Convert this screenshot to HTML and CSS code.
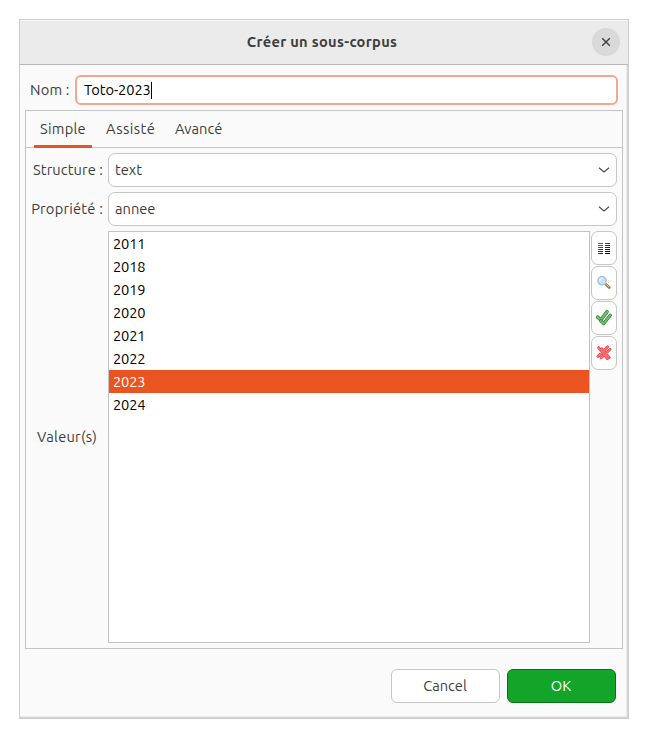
FILE: index.html
```html
<!DOCTYPE html>
<html lang="fr">
<head>
<meta charset="utf-8">
<title>Créer un sous-corpus</title>
<link rel="stylesheet" href="styles.css">
</head>
<body>
<main class="dialog">
  <header class="titlebar">
    <h1 class="title">Créer un sous-corpus</h1>
    <button class="close" aria-label="Close"><svg width="10" height="10" viewBox="0 0 10 10"><path d="M1.2 1.2 8.8 8.8M8.8 1.2 1.2 8.8" stroke="#3d3d3d" stroke-width="1.4"/></svg></button>
  </header>
  <div class="name-row">
    <span class="name-label">Nom :</span>
    <div class="entry"><span class="entry-text">Toto-2023</span><i class="caret"></i></div>
  </div>
  <section class="notebook">
    <nav class="tabs">
      <span class="tab active">Simple</span>
      <span class="tab assist">Assisté</span>
      <span class="tab">Avancé</span>
    </nav>
    <div class="form">
      <span class="label structure">Structure :</span>
      <div class="combo"><span>text</span><svg width="12" height="8" viewBox="0 0 12 8"><path d="M1 1.7 6 6 11 1.7" fill="none" stroke="#4d4d4d" stroke-width="1.2"/></svg></div>
      <span class="label property">Propriété :</span>
      <div class="combo"><span>annee</span><svg width="12" height="8" viewBox="0 0 12 8"><path d="M1 1.7 6 6 11 1.7" fill="none" stroke="#4d4d4d" stroke-width="1.2"/></svg></div>
      <span class="label values">Valeur(s)</span>
      <div class="value-area">
        <ul class="list">
          <li>2011</li><li>2018</li><li>2019</li><li>2020</li><li>2021</li><li>2022</li><li class="selected">2023</li><li>2024</li>
        </ul>
        <div class="tools">
          <button class="tool" aria-label="List"><svg width="16" height="16" viewBox="0 0 16 16"><defs><linearGradient id="ink" gradientUnits="userSpaceOnUse" x1="2" y1="2" x2="12" y2="14"><stop stop-color="#777"/><stop offset="1" stop-color="#000"/></linearGradient></defs><path d="M2 3.5h5M9 3.5h5M2 5.5h5M9 5.5h5M2 7.5h5M9 7.5h5M2 9.5h5M9 9.5h5M2 11.5h5M9 11.5h5M2 13.5h5M9 13.5h5" stroke="url(#ink)"/></svg></button>
          <button class="tool" aria-label="Search"><svg width="16" height="16" viewBox="0 0 16 16"><path d="m10 9.6 3.2 3" stroke="#a87a45" stroke-width="2.8" stroke-linecap="round"/><path d="m10.5 9.6 2.5 2.4" stroke="#eac08a"/><circle cx="6" cy="5.8" r="4.2" fill="#c5e1fa" stroke="#9bb9e2" stroke-width="1.2"/><path d="M3.6 5.8Q4 3.2 6.7 3.3" fill="none" stroke="#eff8ff" stroke-width="1.5"/></svg></button>
          <button class="tool" aria-label="Select all"><svg width="18" height="18" viewBox="0 0 18 18"><g fill="none" stroke-linecap="round" stroke-linejoin="round"><path d="M2.6 8.2 5.8 11 12 2.8" stroke="#37873b" stroke-width="3.6"/><path d="M2.6 8.2 5.8 11 12 2.8" stroke="#76c076" stroke-width="2"/><path d="m5.7 11.8 3 2.7 6.6-8.2" stroke="#37873b" stroke-width="3.4"/><path d="m5.7 11.8 3 2.7 6.6-8.2" stroke="#76c076" stroke-width="1.8"/></g></svg></button>
          <button class="tool" aria-label="Clear"><svg width="18" height="18" viewBox="0 0 18 18"><g fill="none" stroke-linecap="round"><path d="m3.6 3.6 8.8 11M6.8 4.8l7.4 8.8M12.6 2.8 3 12.4M15 5.2 6.2 13.8" stroke="#e83f46" stroke-width="2.8"/><path d="m3.6 3.6 8.8 11M6.8 4.8l7.4 8.8M12.6 2.8 3 12.4M15 5.2 6.2 13.8" stroke="#ff6b70" stroke-width="1.7"/></g></svg></button>
        </div>
      </div>
    </div>
  </section>
  <footer class="actions">
    <button class="action">Cancel</button>
    <button class="action ok">OK</button>
  </footer>
</main>
</body>
</html>
```
FILE: styles.css
```css
* { box-sizing: border-box; }
body { margin: 0; padding: 19px; background: #fff; font: 14.667px/20px Ubuntu, "Noto Sans", sans-serif; color: #3d3d3d; }
button { font: inherit; color: inherit; padding: 0; margin: 0; }
svg { display: block; }
.dialog { width: 610px; height: 700px; display: flex; flex-direction: column; background: #fafafa; border: 1px solid #cdcdcd; box-shadow: inset -1px -1px #d4d4d4, inset -2px -2px #ececec; }
.titlebar { height: 45px; flex: none; display: grid; grid-template-columns: 1fr auto 1fr; align-items: center; background: #ebebeb; border-top: 1px solid #fafafa; border-bottom: 1px solid #b8b8b8; padding: 0 8px 2px 0; }
.title { grid-column: 2; margin: 0 0 0 4px; font-size: 14.667px; line-height: 20px; font-weight: 700; white-space: nowrap; letter-spacing: .3px; }
.close { justify-self: end; width: 28px; height: 28px; border: 0; border-radius: 50%; background: #d9d9d9; display: grid; place-items: center; }
.name-row { display: flex; align-items: center; height: 30px; margin: 10px 10px 0 10px; flex: none; }
.name-label { width: 45px; white-space: nowrap; letter-spacing: .2px; }
.entry { flex: 1; height: 30px; border: 2px solid #f4a78e; border-radius: 6px; background: #fff; color: #000; display: flex; align-items: center; padding-left: 7px; }
.entry-text { letter-spacing: -.1px; }
.caret { width: 1px; height: 17px; background: #000; }
.notebook { margin: 5px 4px 0 5px; width: 598px; height: 539px; border: 1px solid #c4c4c4; flex: none; }
.tabs { display: flex; height: 37px; padding-left: 8px; gap: 8px; border-bottom: 1px solid #c4c4c4; }
.tab { height: 37px; padding: 0 6px; line-height: 36px; white-space: nowrap; }
.active { width: 58px; border-bottom: 3px solid #e95420; letter-spacing: .25px; }
.assist { width: 61px; letter-spacing: .45px; }
.form { display: grid; grid-template-columns: 77px 509px; grid-template-rows: 34px 34px 412px; row-gap: 5px; column-gap: 5px; padding-top: 5px; align-items: center; }
.label { justify-self: end; white-space: nowrap; }
.structure { letter-spacing: .1px; }
.property { letter-spacing: .22px; }
.values { justify-self: center; letter-spacing: .25px; padding-left: 5px; }
.combo { height: 34px; border: 1px solid #c6c6c6; border-radius: 7px; background: #fff; display: flex; align-items: center; justify-content: space-between; padding: 0 6px; }
.value-area { display: flex; gap: 1px; height: 412px; }
.list { width: 482px; margin: 0; padding: 0; list-style: none; border: 1px solid #c4c4c4; background: #fff; color: #000; letter-spacing: -.15px; }
.list li { height: 23px; line-height: 23px; padding-left: 4px; }
.list .selected { background: #e95420; color: #fff; }
.tools { display: flex; flex-direction: column; gap: 1px; }
.tool { width: 26px; height: 34px; border: 1px solid #c6c6c6; border-radius: 7px; background: #fff; display: grid; place-items: center; }
.actions { display: flex; justify-content: flex-end; gap: 7px; padding: 20px 12px 0 0; }
.action { width: 109px; height: 34px; border: 1px solid #c6c6c6; border-radius: 6px; background: #fff; padding-right: 1px; }
.ok { border-color: #067319; background: #12a52a; color: #fff; }
```
